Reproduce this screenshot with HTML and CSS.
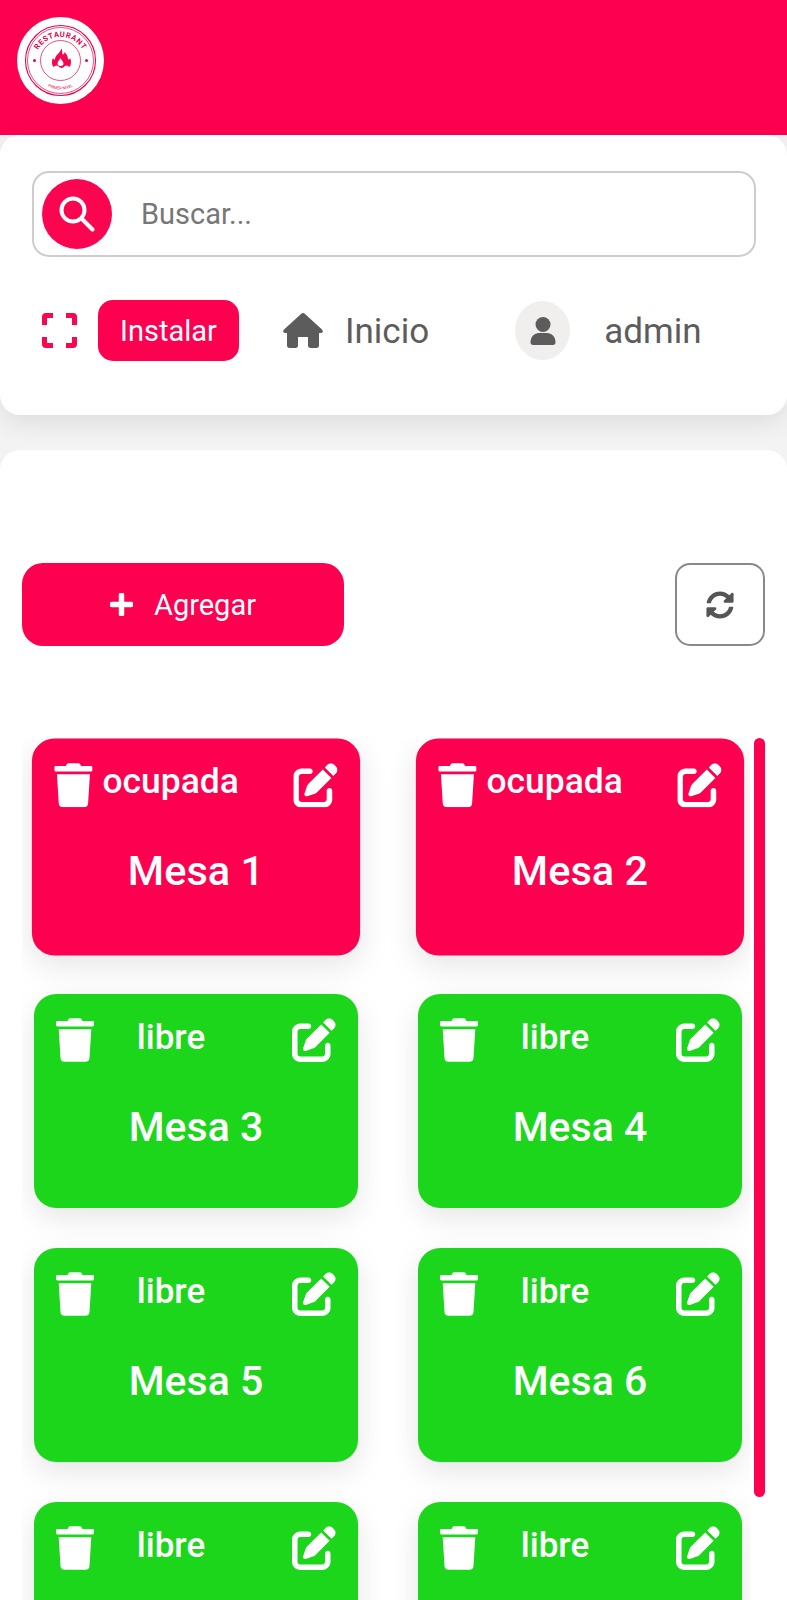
FILE: index.html
```html
<!DOCTYPE html>
<html lang="en">
<head>
    <meta charset="UTF-8">
    <meta name="viewport" content="width=device-width, initial-scale=1.0">
    <title>Restaurant - Mesas</title>
    <link rel="stylesheet" href="styles.css">
</head>
<body>
    <svg class="icon-defs" aria-hidden="true">
        <symbol id="icon-trash" viewBox="0 0 448 512">
            <path d="M432 32H312l-9.4-18.7A24 24 0 0 0 281.1 0H166.8a23.72 23.72 0 0 0-21.4 13.3L136 32H16A16 16 0 0 0 0 48v32a16 16 0 0 0 16 16h416a16 16 0 0 0 16-16V48a16 16 0 0 0-16-16zM53.2 467a48 48 0 0 0 47.9 45h245.8a48 48 0 0 0 47.9-45L416 128H32z"/>
        </symbol>
        <symbol id="icon-edit" viewBox="0 0 512 512">
            <path d="M471.6 21.7c-21.9-21.9-57.3-21.9-79.2 0L362.3 51.7l97.9 97.9 30.1-30.1c21.9-21.9 21.9-57.3 0-79.2L471.6 21.7zm-299.2 220c-6.1 6.1-10.8 13.6-13.5 21.9l-29.6 88.8c-2.9 8.6-.6 18.1 5.8 24.6s15.9 8.7 24.6 5.8l88.8-29.6c8.2-2.7 15.7-7.4 21.9-13.5L437.7 172.3 339.7 74.3 172.4 241.7zM96 64C43 64 0 107 0 160V416c0 53 43 96 96 96H352c53 0 96-43 96-96V320c0-17.7-14.3-32-32-32s-32 14.3-32 32v96c0 17.7-14.3 32-32 32H96c-17.7 0-32-14.3-32-32V160c0-17.7 14.3-32 32-32h96c17.7 0 32-14.3 32-32s-14.3-32-32-32H96z"/>
        </symbol>
    </svg>

    <header class="topbar">
        <svg class="logo" viewBox="0 0 87 87">
            <defs>
                <path id="logoTop" d="M17.500 46a26 26 0 0 1 52 0"/>
                <path id="logoBottom" d="M14.500 43.500a29 29 0 0 0 58 0"/>
            </defs>
            <circle cx="43.5" cy="43.5" r="43.5" fill="#fff"/>
            <circle cx="43.500" cy="43.500" r="35" fill="none" stroke="#e0064f" stroke-width="1.100"/>
            <circle cx="43.500" cy="43.500" r="33" fill="none" stroke="#e0064f" stroke-width=".7"/>
            <circle cx="43.500" cy="43.500" r="20" fill="none" stroke="#e0064f" stroke-width=".7"/>
            <circle cx="17.500" cy="43.500" r="1.500" fill="#e0064f"/>
            <circle cx="69.500" cy="43.500" r="1.500" fill="#e0064f"/>
            <text class="logo-title"><textPath href="#logoTop" startOffset="50%" text-anchor="middle">RESTAURANT</textPath></text>
            <text class="logo-sub"><textPath href="#logoBottom" startOffset="50%" text-anchor="middle">PRIMER NIVEL</textPath></text>
            <path fill="#f5064f" fill-rule="evenodd" d="M44.500 31.500c1.500 2.500 0 5 1.500 6 1 0 1.500-1 1.500-2.500 2.500 2 3.500 5 3.500 7.500 1 0 1.500-.5 2-1.500 1.500 3 1.500 6.500-.5 9-1.500-1.500-3-2-4.500-1-1 .7-2 2-3.500 2s-2.500-1.300-3.500-2c-1.500-1-3-.5-4.500 1-2-2.500-2-6-.5-9 .5 1 1 1.500 2 1.500 0-4.500 5-6 6.500-11zM43.500 41c-1 2-3 3.500-3 6 0 1.200 1.500 2 3 2s3-.8 3-2c0-2.500-2-3.500-3-6z"/>
        </svg>
    </header>

    <section class="panel panel-nav">
        <div class="search-box">
            <span class="search-btn">
                <svg class="search-icon" viewBox="0 0 36 36"><circle cx="14" cy="14" r="11.500" fill="none" stroke="#fff" stroke-width="4"/><path d="M23 23l10.500 10.500" stroke="#fff" stroke-width="4" stroke-linecap="round"/></svg>
            </span>
            <span class="search-placeholder">Buscar...</span>
        </div>
        <nav class="nav-row">
            <svg class="fullscreen-icon" viewBox="0 0 35 35"><path d="M2.500 12V4Q2.500 2.500 4 2.500H11M24 2.500h7Q32.500 2.500 32.500 4V12M32.500 24v7Q32.500 32.500 31 32.500H24M11 32.500H4Q2.500 32.500 2.500 31V24" fill="none" stroke="#fa0650" stroke-width="5"/></svg>
            <button class="install-btn">Instalar</button>
            <a class="nav-link">
                <svg class="home-icon" viewBox="0 0 40 35"><path d="M20 0c.8 0 1.500.5 2 1l17 15.500c1.500 1.500.8 3.500-1 3.500h-2v12.500c0 1.500-1 2.500-2.500 2.500H27.500c-1.500 0-2.500-1-2.500-2.500V24H15v8.500c0 1.500-1 2.500-2.500 2.500H6.500C5 35 4 34 4 32.500V20H2c-1.800 0-2.500-2-1-3.500L18 1c.5-.5 1.200-1 2-1z"/></svg>
                <span class="nav-text">Inicio</span>
            </a>
            <a class="nav-user">
                <span class="avatar">
                    <svg class="user-icon" viewBox="0 0 26 28"><ellipse cx="13" cy="7.500" rx="7.500" ry="7.500"/><path d="M.5 25.500c0-6 4-9.500 8.500-9.500h8c4.500 0 8.500 3.500 8.500 9.500 0 1.500-1 2.500-2.500 2.500H3c-1.500 0-2.500-1-2.500-2.500z"/></svg>
                </span>
                <span class="nav-text">admin</span>
            </a>
        </nav>
    </section>

    <main class="panel panel-main">
        <div class="actions">
            <button class="add-btn">
                <svg class="plus-icon" viewBox="0 0 23 23"><path d="M11.500 2v19M2 11.500h19" stroke="#fff" stroke-width="5.500" stroke-linecap="round"/></svg>
                Agregar
            </button>
            <button class="refresh-btn">
                <svg class="refresh-icon" viewBox="0 0 512 512"><path d="M370.72 133.28C339.458 104.008 298.888 87.962 255.848 88c-77.458.068-144.328 53.178-162.791 126.85-1.344 5.363-6.122 9.15-11.651 9.15H24.103c-7.498 0-13.194-6.807-11.807-14.176C33.933 94.924 134.813 8 256 8c66.448 0 126.791 26.136 171.315 68.685L463.03 40.97C478.149 25.851 504 36.559 504 57.941V192c0 13.255-10.745 24-24 24H345.941c-21.382 0-32.09-25.851-16.971-40.971l41.75-41.749zM32 296h134.059c21.382 0 32.09 25.851 16.971 40.971l-41.75 41.75c31.262 29.273 71.835 45.319 114.876 45.28 77.418-.07 144.315-53.144 162.787-126.849 1.344-5.363 6.122-9.15 11.651-9.15h57.304c7.498 0 13.194 6.807 11.807 14.176C478.067 417.076 377.187 504 256 504c-66.448 0-126.791-26.136-171.315-68.685L48.97 471.03C33.851 486.149 8 475.441 8 454.059V320c0-13.255 10.745-24 24-24z"/></svg>
            </button>
        </div>

        <div class="tables-wrap">
            <div class="tables">
                <article class="table-card busy">
                    <div class="card-top">
                        <svg class="trash"><use href="#icon-trash"/></svg>
                        <span class="status">ocupada</span>
                        <svg class="edit"><use href="#icon-edit"/></svg>
                    </div>
                    <h2>Mesa 1</h2>
                </article>
                <article class="table-card busy">
                    <div class="card-top">
                        <svg class="trash"><use href="#icon-trash"/></svg>
                        <span class="status">ocupada</span>
                        <svg class="edit"><use href="#icon-edit"/></svg>
                    </div>
                    <h2>Mesa 2</h2>
                </article>
                <article class="table-card free">
                    <div class="card-top">
                        <svg class="trash"><use href="#icon-trash"/></svg>
                        <span class="status">libre</span>
                        <svg class="edit"><use href="#icon-edit"/></svg>
                    </div>
                    <h2>Mesa 3</h2>
                </article>
                <article class="table-card free">
                    <div class="card-top">
                        <svg class="trash"><use href="#icon-trash"/></svg>
                        <span class="status">libre</span>
                        <svg class="edit"><use href="#icon-edit"/></svg>
                    </div>
                    <h2>Mesa 4</h2>
                </article>
                <article class="table-card free">
                    <div class="card-top">
                        <svg class="trash"><use href="#icon-trash"/></svg>
                        <span class="status">libre</span>
                        <svg class="edit"><use href="#icon-edit"/></svg>
                    </div>
                    <h2>Mesa 5</h2>
                </article>
                <article class="table-card free">
                    <div class="card-top">
                        <svg class="trash"><use href="#icon-trash"/></svg>
                        <span class="status">libre</span>
                        <svg class="edit"><use href="#icon-edit"/></svg>
                    </div>
                    <h2>Mesa 6</h2>
                </article>
                <article class="table-card free">
                    <div class="card-top">
                        <svg class="trash"><use href="#icon-trash"/></svg>
                        <span class="status">libre</span>
                        <svg class="edit"><use href="#icon-edit"/></svg>
                    </div>
                </article>
                <article class="table-card free">
                    <div class="card-top">
                        <svg class="trash"><use href="#icon-trash"/></svg>
                        <span class="status">libre</span>
                        <svg class="edit"><use href="#icon-edit"/></svg>
                    </div>
                </article>
            </div>
            <div class="scroll-thumb"></div>
        </div>
    </main>
</body>
</html>
```

FILE: styles.css
```css
html, body {
    height: 1600px;
    overflow: hidden;
}
body {
    margin: 0;
    font-family: Roboto, "Liberation Sans", sans-serif;
    background-color: #f3f3f3;
    color: #5c5c5c;
}
button {
    font-family: inherit;
    border: none;
    padding: 0;
}
.icon-defs {
    display: none;
}

.topbar {
    height: 135px;
    box-sizing: border-box;
    padding: 17px;
    background-color: #fd0050;
}
.logo {
    display: block;
    width: 87px;
    height: 87px;
}
.logo-title {
    font-size: 7.6px;
    font-weight: 700;
    letter-spacing: .6px;
    fill: #e0064f;
}
.logo-sub {
    font-size: 4px;
    fill: #e0064f;
}

.panel {
    background-color: #fff;
}
.panel-nav {
    height: 280px;
    box-sizing: border-box;
    padding: 36px 32px 0;
    border-radius: 20px;
    box-shadow: 0 8px 26px rgba(0, 0, 0, 0.09);
    position: relative;
}
.search-box {
    height: 86px;
    box-sizing: border-box;
    display: flex;
    align-items: center;
    margin-right: -1px;
    padding-left: 8px;
    border: 2.5px solid #cdcdcd;
    border-radius: 17px;
}
.search-btn {
    width: 70px;
    height: 70px;
    border-radius: 50%;
    background-color: #fa0650;
    display: flex;
    align-items: center;
    justify-content: center;
}
.search-icon {
    width: 36px;
    height: 36px;
}
.search-placeholder {
    margin-left: 29px;
    font-size: 29px;
    color: #777;
}
.nav-row {
    display: flex;
    align-items: center;
    margin-top: 43px;
    padding-left: 10px;
    font-size: 35px;
}
.nav-text {
    padding-top: 2px;
}
.fullscreen-icon {
    width: 35px;
    height: 35px;
}
.install-btn {
    width: 141px;
    height: 61px;
    margin-left: 21px;
    border-radius: 15px;
    background-color: #fd0050;
    color: #fff;
    font-size: 29px;
}
.nav-link {
    display: flex;
    align-items: center;
    gap: 22px;
    margin-left: 44px;
}
.home-icon {
    width: 40px;
    height: 35px;
    fill: #5c5c5c;
}
.nav-user {
    display: flex;
    align-items: center;
    gap: 34px;
    margin-left: 86px;
}
.avatar {
    width: 55px;
    height: 59px;
    border-radius: 50%;
    background-color: #f1eeee;
    display: flex;
    align-items: center;
    justify-content: center;
}
.user-icon {
    width: 26px;
    height: 28px;
    fill: #5c5c5c;
}

.panel-main {
    margin-top: 35px;
    height: 1150px;
    box-sizing: border-box;
    padding-top: 113px;
    border-radius: 20px 20px 0 0;
}
.actions {
    display: flex;
    justify-content: space-between;
    align-items: flex-start;
    padding: 0 22px;
}
.add-btn {
    width: 322px;
    height: 83px;
    display: flex;
    align-items: center;
    justify-content: center;
    gap: 21px;
    border-radius: 21px;
    background-color: #fd0050;
    color: #fff;
    font-size: 29px;
}
.plus-icon {
    width: 23px;
    height: 23px;
}
.refresh-btn {
    width: 90px;
    height: 83px;
    display: flex;
    align-items: center;
    justify-content: center;
    box-sizing: border-box;
    border: 2px solid #888;
    border-radius: 15px;
    background-color: #fff;
}
.refresh-icon {
    width: 28px;
    height: 28px;
    fill: #555;
}

.tables-wrap {
    position: relative;
    margin: 92px 22px 0;
    height: 862px;
}
.tables {
    width: 728px;
    height: 862px;
    box-sizing: border-box;
    overflow: hidden;
    padding: 2px 0 0 12px;
    display: grid;
    grid-template-columns: 324px 324px;
    grid-auto-rows: 214px;
    column-gap: 60px;
    row-gap: 40px;
}
.scroll-thumb {
    position: absolute;
    top: 0;
    right: 0;
    width: 11px;
    height: 759px;
    border-radius: 6px;
    background-color: #fd0050;
}
.table-card {
    box-sizing: border-box;
    padding: 24px 22px 0;
    border-radius: 22px;
    color: #fff;
    box-shadow: 0 10px 30px rgba(0, 0, 0, 0.1);
}
.busy {
    background-color: #fd0050;
    transform: scale(1.013);
}
.free {
    background-color: #1cd61c;
}
.card-top {
    display: flex;
    align-items: flex-start;
}
.trash {
    width: 38px;
    height: 44px;
    fill: #fff;
    flex: none;
}
.edit {
    width: 44px;
    height: 44px;
    fill: #fff;
    flex: none;
    margin-left: auto;
}
.status {
    width: 154px;
    text-align: center;
    font-size: 35px;
    font-weight: 500;
    line-height: 40px;
}
.table-card h2 {
    margin: 37px 0 0;
    text-align: center;
    font-size: 41px;
    font-weight: 500;
    line-height: 56px;
}
.busy .status {
    margin-top: -1px;
}
.busy h2 {
    margin-top: 35px;
}
```
